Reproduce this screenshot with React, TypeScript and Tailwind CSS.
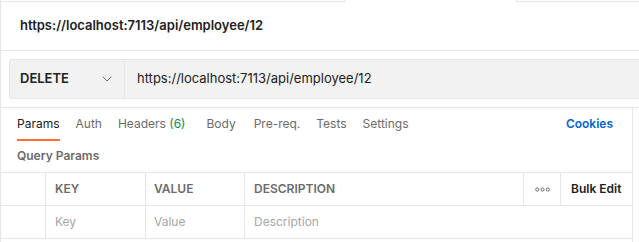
import React from "react";

function Chevron() {
  return (
    <svg width="10" height="6" viewBox="0 0 10 6" fill="none">
      <path d="M1 1l4 4 4-4" stroke="#6b6b6b" strokeWidth="1" strokeLinecap="round" strokeLinejoin="round" />
    </svg>
  );
}

function Dots() {
  return (
    <svg width="15" height="5" viewBox="0 0 15 5" fill="none">
      <circle cx="2.2" cy="2.5" r="1.6" stroke="#6b6b6b" strokeWidth="1" />
      <circle cx="7.5" cy="2.5" r="1.6" stroke="#6b6b6b" strokeWidth="1" />
      <circle cx="12.8" cy="2.5" r="1.6" stroke="#6b6b6b" strokeWidth="1" />
    </svg>
  );
}

export default function App() {
  const url = "https://localhost:7113/api/employee/12";
  return (
    <div className="w-[639px] h-[242px] bg-white border-l border-[#e6e6e6] overflow-hidden font-['Inter',sans-serif] text-[#212121]">
      <div className="flex h-[2px]">
        <div className="w-[343px] border-b border-[#e6e6e6]" />
        <div className="w-[173px] border-x border-[#e6e6e6]" />
        <div className="flex-1 border-b border-[#e6e6e6]" />
      </div>
      <div className="h-[49px] border-b border-[#e6e6e6] flex items-center pl-[19px] text-[13px] font-semibold">
        {url}
      </div>
      <div className="h-[57px] border-b border-[#e6e6e6] pt-[8px] pl-[8px]">
        <div className="flex h-[40px] border border-r-0 border-[#e6e6e6] bg-[#f2f2f2] rounded-l-[3px]">
          <div className="w-[115px] border-r border-[#e6e6e6] flex items-center pl-[10px] pr-[12px] justify-between">
            <span className="text-[13px] font-semibold">DELETE</span>
            <Chevron />
          </div>
          <div className="flex items-center pl-[12px] text-[13px]">{url}</div>
        </div>
      </div>
      <div className="w-[632px] h-[134px] border-r border-[#e6e6e6]">
        <div className="flex items-start h-[32px] pl-[16px] pr-[19px] text-[12px] text-[#6b6b6b]">
          <div className="flex">
            <div className="flex flex-col items-stretch">
              <span className="h-[31px] flex items-center text-[#212121]">Params</span>
              <div className="h-[2px] bg-[#ff6c37]" />
            </div>
            <span className="h-[31px] flex items-center ml-[16px]">Auth</span>
            <span className="h-[31px] flex items-center ml-[16px]">
              Headers&nbsp;<span className="text-[#0a8f47]">(6)</span>
            </span>
            <span className="h-[31px] flex items-center ml-[21px]">Body</span>
            <span className="h-[31px] flex items-center ml-[18px]">Pre-req.</span>
            <span className="h-[31px] flex items-center ml-[16px]">Tests</span>
            <span className="h-[31px] flex items-center ml-[16px]">Settings</span>
          </div>
          <span className="ml-auto h-[31px] flex items-center font-semibold text-[12px] text-[#0265d2]">Cookies</span>
        </div>
        <div className="h-[32px] flex items-center pl-[16px] text-[12px] font-semibold text-[#6b6b6b]">
          Query Params
        </div>
        <div className="border-t border-[#e6e6e6]">
          <div className="grid grid-cols-[45px_100px_99px_279px_37px_1fr] h-[33px] border-b border-[#e6e6e6] text-[12px] font-semibold text-[#6b6b6b]">
            <div className="border-r border-[#e6e6e6]" />
            <div className="border-r border-[#e6e6e6] flex items-center pl-[9px]">KEY</div>
            <div className="border-r border-[#e6e6e6] flex items-center pl-[8px]">VALUE</div>
            <div className="border-r border-[#e6e6e6] flex items-center pl-[9px]">DESCRIPTION</div>
            <div className="border-r border-[#e6e6e6] flex items-center justify-center">
              <Dots />
            </div>
            <div className="flex items-center pl-[10px] text-[#212121]">Bulk Edit</div>
          </div>
          <div className="grid grid-cols-[45px_100px_99px_1fr] h-[33px] border-b border-[#e6e6e6] text-[12px] text-[#a6a6a6]">
            <div className="border-r border-[#e6e6e6]" />
            <div className="border-r border-[#e6e6e6] flex items-center pl-[9px]">Key</div>
            <div className="border-r border-[#e6e6e6] flex items-center pl-[8px]">Value</div>
            <div className="flex items-center pl-[9px]">Description</div>
          </div>
        </div>
      </div>
    </div>
  );
}
